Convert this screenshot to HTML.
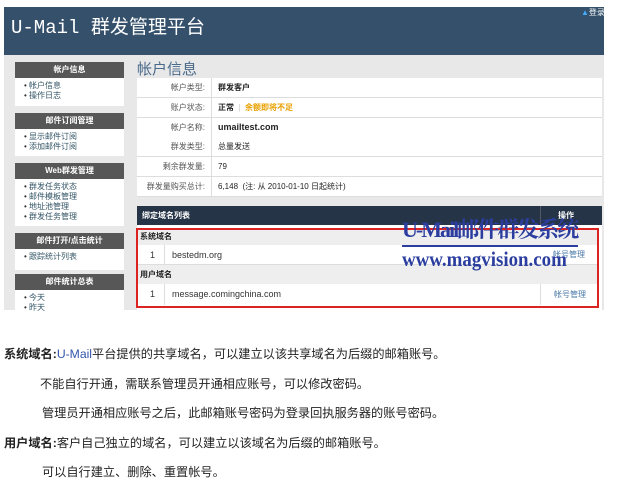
<!DOCTYPE html>
<html><head><meta charset="utf-8"><style>
*{margin:0;padding:0;box-sizing:border-box}
body{width:629px;height:489px;background:#fff;position:relative;overflow:hidden;font-family:"Liberation Sans","Noto Sans CJK SC",sans-serif;font-size:8px;color:#333}
.a{position:absolute}
.hd{background:#575757;color:#fff;font-weight:bold;text-align:center;font-size:8px;line-height:16px}
.it{background:#fff;color:#356;font-size:8px;line-height:10px;padding:3px 0 0 9px}
.it div:before{content:"• ";color:#333}
.row{position:absolute;left:137px;width:465px;height:20px;border-bottom:1px solid #ddd;background:#fff}
.row .l{position:absolute;left:0;width:75px;text-align:right;padding-right:6px;line-height:19px;color:#555;border-right:1px solid #ddd;height:19px}
.row .v{position:absolute;left:81px;line-height:19px;color:#222}
.t{position:absolute;left:4px;font-size:12.2px;line-height:16px;color:#222;white-space:nowrap}
</style></head><body>
<div class="a" style="left:4px;top:7px;width:600px;height:48px;background:#34506b"></div>
<div class="a" style="left:11px;top:16px;color:#fff;font-size:19px;font-family:'Liberation Mono','Noto Sans CJK SC',monospace;line-height:24px;white-space:nowrap">U-Mail 群发管理平台</div>
<div class="a" style="left:581px;top:7px;color:#fff;font-size:8px"><span style="color:#4af">▲</span>登录</div>
<div class="a" style="left:4px;top:55px;width:600px;height:255px;background:#e8e8e8"></div>

<div class="a hd" style="left:15px;top:62px;width:109px">帐户信息</div>
<div class="a it" style="left:15px;top:78px;width:109px;height:28px"><div>帐户信息</div><div>操作日志</div></div>
<div class="a hd" style="left:15px;top:113px;width:109px">邮件订阅管理</div>
<div class="a it" style="left:15px;top:129px;width:109px;height:27px"><div>显示邮件订阅</div><div>添加邮件订阅</div></div>
<div class="a hd" style="left:15px;top:163px;width:109px">Web群发管理</div>
<div class="a it" style="left:15px;top:179px;width:109px;height:47px"><div>群发任务状态</div><div>邮件模板管理</div><div>地址池管理</div><div>群发任务管理</div></div>
<div class="a hd" style="left:15px;top:233px;width:109px">邮件打开/点击统计</div>
<div class="a it" style="left:15px;top:249px;width:109px;height:21px"><div>跟踪统计列表</div></div>
<div class="a hd" style="left:15px;top:274px;width:109px">邮件统计总表</div>
<div class="a it" style="left:15px;top:290px;width:109px;height:20px"><div>今天</div><div>昨天</div></div>

<div class="a" style="left:137px;top:61px;color:#4a6a8a;font-size:15px;line-height:17px">帐户信息</div>
<div class="a" style="left:137px;top:78px;width:465px;height:118px;border:1px solid #ddd;background:#fff"></div>
<div class="row" style="top:78px"><span class="l">帐户类型:</span><span class="v" style="font-weight:bold">群发客户</span></div>
<div class="row" style="top:98px"><span class="l">账户状态:</span><span class="v" style="font-weight:bold">正常 <span style="color:#ccc;font-weight:normal">&nbsp;|&nbsp;</span> <span style="color:#e8a000">余额即将不足</span></span></div>
<div class="row" style="top:118px"><span class="l">帐户名称:</span><span class="v" style="font-weight:bold;font-size:9px">umailtest.com</span></div>
<div class="row" style="top:137px"><span class="l">群发类型:</span><span class="v">总量发送</span></div>
<div class="row" style="top:157px"><span class="l">剩余群发量:</span><span class="v">79</span></div>
<div class="row" style="top:177px"><span class="l">群发量购买总计:</span><span class="v">6,148 &nbsp;(注: 从 2010-01-10 日起统计)</span></div>

<div class="a" style="left:137px;top:206px;width:465px;height:19px;background:#253446;color:#fff;font-weight:bold;line-height:19px;padding-left:5px">绑定域名列表</div>
<div class="a" style="left:540px;top:206px;width:1px;height:19px;background:#556"></div>
<div class="a" style="left:558px;top:206px;color:#fff;font-weight:bold;line-height:19px">操作</div>
<div class="a" style="left:137px;top:225px;width:465px;height:85px;background:#fff"></div>
<div class="a" style="left:138px;top:229px;width:460px;height:16px;background:#eee;font-weight:bold;line-height:16px;padding-left:2px;color:#222">系统域名</div>
<div class="a" style="left:138px;top:245px;width:460px;height:20px;border-bottom:1px solid #ddd;line-height:20px;color:#333;font-size:9px"><span style="position:absolute;left:12px">1</span><span style="position:absolute;left:26px;top:0;width:1px;height:20px;background:#ddd"></span><span style="position:absolute;left:34px">bestedm.org</span></div>
<div class="a" style="left:138px;top:265px;width:460px;height:19px;background:#eee;font-weight:bold;line-height:19px;padding-left:2px;color:#222">用户域名</div>
<div class="a" style="left:138px;top:284px;width:460px;height:21px;line-height:21px;color:#333;font-size:9px"><span style="position:absolute;left:12px">1</span><span style="position:absolute;left:26px;top:0;width:1px;height:21px;background:#ddd"></span><span style="position:absolute;left:34px">message.comingchina.com</span><span style="position:absolute;left:402px;top:0;width:1px;height:21px;background:#ddd"></span><span style="position:absolute;left:416px;color:#4a7aa8;font-size:8px">帐号管理</span></div>
<div class="a" style="left:553px;top:249px;color:#4a7aa8">帐号管理</div>
<div class="a" style="left:136px;top:228px;width:463px;height:80px;border:2px solid #d22"></div>

<div class="a" style="left:402px;top:217px;color:#2b3e9f;font-size:22px;font-family:'Liberation Serif','Noto Serif CJK SC',serif;font-weight:bold;line-height:26px;letter-spacing:-2px;white-space:nowrap">U-Mail邮件群发系统</div>
<div class="a" style="left:402px;top:245px;width:176px;height:2px;background:#2b3e9f"></div>
<div class="a" style="left:402px;top:247px;color:#2b3e9f;font-size:21px;font-family:'Liberation Serif',serif;font-weight:bold;line-height:24px;white-space:nowrap;transform:scaleX(0.9);transform-origin:left">www.magvision.com</div>

<div class="t" style="top:346px"><b>系统域名:</b><span style="color:#3355aa">U-Mail</span>平台提供的共享域名，可以建立以该共享域名为后缀的邮箱账号。</div>
<div class="t" style="top:376px;left:40px">不能自行开通，需联系管理员开通相应账号，可以修改密码。</div>
<div class="t" style="top:405px;left:42px">管理员开通相应账号之后，此邮箱账号密码为登录回执服务器的账号密码。</div>
<div class="t" style="top:435px"><b>用户域名:</b>客户自己独立的域名，可以建立以该域名为后缀的邮箱账号。</div>
<div class="t" style="top:464px;left:42px">可以自行建立、删除、重置帐号。</div>
</body></html>
